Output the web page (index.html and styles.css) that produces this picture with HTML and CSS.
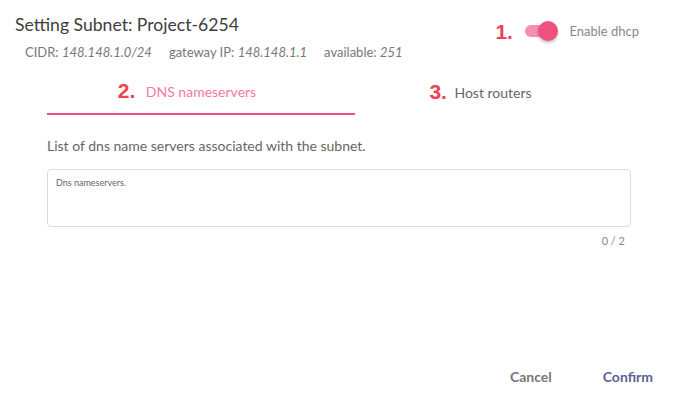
FILE: index.html
```html
<!DOCTYPE html>
<html>
<head>
<meta charset="utf-8">
<link rel="stylesheet" href="styles.css">
</head>
<body>
<div class="dialog">
  <div class="header">
    <div class="head-left">
      <h1 class="title">Setting Subnet: Project-6254</h1>
      <div class="meta">
        <span class="meta-item">CIDR: <i>148.148.1.0/24</i></span>
        <span class="meta-item">gateway IP: <i>148.148.1.1</i></span>
        <span class="meta-item">available: <i>251</i></span>
      </div>
    </div>
    <div class="dhcp">
      <span class="mark mark-1">1.</span>
      <span class="switch"><span class="track"></span><span class="knob"></span></span>
      <span class="dhcp-label">Enable dhcp</span>
    </div>
  </div>
  <div class="tabs">
    <div class="tab tab-active"><span class="label"><span class="mark mark-2">2.</span>DNS nameservers</span></div>
    <div class="tab tab-second"><span class="label"><span class="mark mark-3">3.</span>Host routers</span></div>
  </div>
  <div class="body">
    <p class="desc">List of dns name servers associated with the subnet.</p>
    <div class="field">Dns nameservers.</div>
    <div class="counter">0 / 2</div>
  </div>
  <div class="actions">
    <button class="btn btn-cancel">Cancel</button>
    <button class="btn btn-confirm">Confirm</button>
  </div>
</div>
</body>
</html>
```

FILE: styles.css
```css
html, body {
  margin: 0;
  padding: 0;
  background: #ffffff;
}
body {
  font-family: Lato, "Open Sans", sans-serif;
  width: 679px;
  height: 403px;
  overflow: hidden;
}
.dialog {
  height: 403px;
  display: flex;
  flex-direction: column;
}
.header {
  display: flex;
  justify-content: space-between;
  align-items: flex-start;
}
.head-left {
  padding: 13px 0 0 15px;
}
.title {
  margin: 0;
  font-size: 17.6px;
  font-weight: 400;
  color: #3d3d3d;
  line-height: 24px;
}
.meta {
  margin-top: 6px;
  padding-left: 10px;
  display: flex;
  gap: 17px;
  font-size: 13px;
  color: #777777;
  line-height: 18px;
}
.meta i {
  font-style: italic;
}
.dhcp {
  position: relative;
  display: flex;
  align-items: center;
  margin: 21px 40px 0 0;
  height: 20px;
}
.mark {
  position: absolute;
  font-family: "Liberation Sans", Arial, sans-serif;
  font-weight: 700;
  font-size: 21px;
  color: #f0424f;
  line-height: 20px;
}
.mark-1 {
  left: -30px;
  top: 1px;
}
.switch {
  position: relative;
  width: 33px;
  height: 20px;
  margin-right: 11px;
}
.track {
  position: absolute;
  left: 0;
  top: 4px;
  width: 28px;
  height: 12px;
  border-radius: 6px;
  background: #f48fb1;
}
.knob {
  position: absolute;
  left: 13px;
  top: 0;
  width: 20px;
  height: 20px;
  border-radius: 50%;
  background: #f0507f;
  box-shadow: 0 2px 3px rgba(0,0,0,0.25);
}
.dhcp-label {
  font-size: 13px;
  color: #888888;
}
.tabs {
  display: flex;
  margin: 8px 48px 0 47px;
}
.tab {
  height: 46px;
  display: flex;
  justify-content: center;
  align-items: center;
  font-size: 14px;
  color: #666666;
  box-sizing: border-box;
}
.tab-active {
  width: 308px;
  color: #f27a9f;
  border-bottom: 2px solid #f0507f;
}
.tab-second {
  flex: 1;
}
.label {
  position: relative;
}
.mark-2 {
  left: -28px;
  top: -2px;
}
.mark-3 {
  left: -25px;
  top: -2px;
}
.body {
  padding: 22px 48px 0 47px;
}
.desc {
  margin: 0;
  font-size: 14px;
  color: #666666;
  line-height: 18px;
}
.field {
  margin-top: 14px;
  height: 58px;
  box-sizing: border-box;
  border: 1px solid #dddddd;
  border-radius: 4px;
  padding: 7px 8px;
  font-size: 9px;
  color: #666666;
}
.counter {
  text-align: right;
  padding-right: 6px;
  margin-top: 7px;
  font-size: 11px;
  color: #888888;
}
.actions {
  margin-top: auto;
  display: flex;
  justify-content: flex-end;
  gap: 51px;
  padding: 0 26px 17px 0;
}
.btn {
  background: none;
  border: none;
  padding: 0;
  font-family: Lato, sans-serif;
  font-size: 14px;
  font-weight: 700;
  line-height: 18px;
  cursor: pointer;
}
.btn-cancel {
  color: #777777;
}
.btn-confirm {
  color: #5c6199;
}
```
